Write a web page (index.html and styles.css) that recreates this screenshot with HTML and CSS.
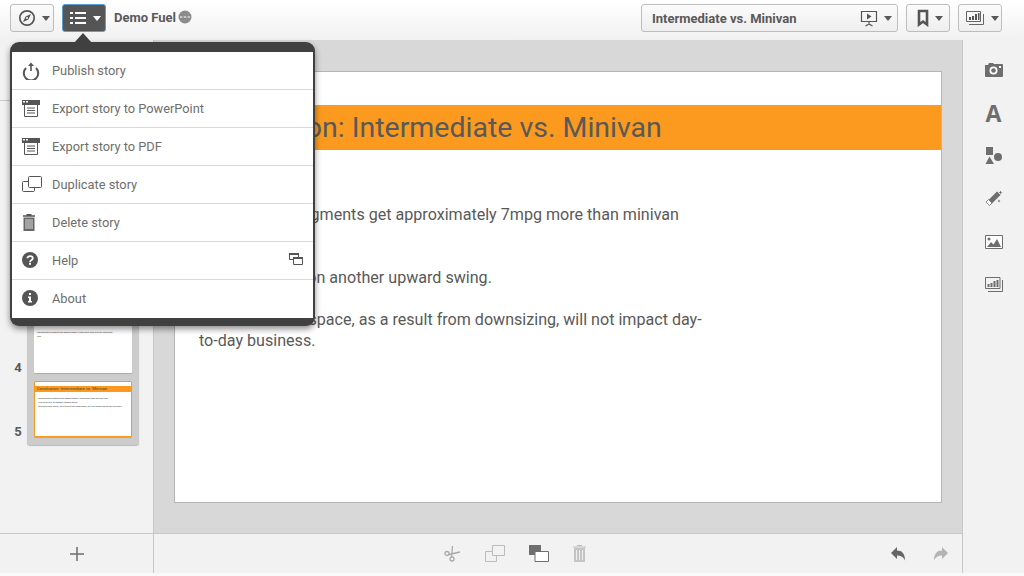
FILE: index.html
```html
<!DOCTYPE html>
<html lang="en">
<head>
    <meta charset="UTF-8">
    <title>Demo Fuel</title>
    <link rel="stylesheet" href="styles.css">
</head>
<body>
    <div class="app">
        <header class="toolbar">
            <button class="tool-btn">
                <svg width="18" height="18" viewBox="0 0 18 18"><circle cx="9" cy="9" r="7.2" fill="none" stroke="#555" stroke-width="1.7"/><path d="M13 5l-2.600 5.400L5 13l2.600-5.400z" fill="#555"/><circle cx="9" cy="9" r="1" fill="#fff"/></svg>
                <span class="caret"></span>
            </button>
            <button class="tool-btn tool-btn-active">
                <svg width="18" height="14" viewBox="0 0 18 14"><path d="M1 1h3v2H1zM6 1h11v2H6zM1 6h3v2H1zM6 6h11v2H6zM1 11h3v2H1zM6 11h11v2H6z" fill="#fff"/></svg>
                <span class="caret"></span>
            </button>
            <span class="app-name">Demo Fuel</span>
            <svg class="status-icon" width="14" height="14" viewBox="0 0 14 14"><circle cx="7" cy="7" r="6.500" fill="#8c8c8c"/><path d="M2 7h2.500M5.800 7h2.500M9.600 7h2.500" stroke="#fff" stroke-width="1"/></svg>
            <div class="spacer"></div>
            <button class="tool-btn story-select">
                <span class="story-name">Intermediate vs. Minivan</span>
                <svg width="18" height="18" viewBox="0 0 18 18"><path d="M1.500 2.500h15v10h-15z" fill="none" stroke="#555" stroke-width="1.200"/><path d="M7 4.500l4.500 3-4.500 3z" fill="#555"/><path d="M9 12.500v2.500M5.500 17L9 15l3.500 2" stroke="#555" stroke-width="1.200" fill="none"/></svg>
                <span class="caret"></span>
            </button>
            <button class="tool-btn">
                <svg width="12" height="18" viewBox="0 0 12 18"><path d="M2 2h8v13.500l-4-3-4 3z" fill="none" stroke="#555" stroke-width="2.600"/></svg>
                <span class="caret"></span>
            </button>
            <button class="tool-btn">
                <svg width="20" height="16" viewBox="0 0 20 16"><path d="M1.500 1.500h14v10h-14z" fill="none" stroke="#666"/><path d="M4 14.500h14.500V4" fill="none" stroke="#666"/><path d="M4 7h2v3H4zM7 6h2v4H7zM10 4h2v6h-2zM13 3h1.500v7H13z" fill="#555"/></svg>
                <span class="caret"></span>
            </button>
        </header>

        <div class="workspace">
            <aside class="sidebar">
                <div class="sidebar-head"></div>
                <div class="slide-list">
                    <div class="slide-nums">
                        <span>1</span><span>2</span><span>3</span><span>4</span><span>5</span>
                    </div>
                    <div class="slide-group">
                        <div class="thumb"></div>
                        <div class="thumb"></div>
                        <div class="thumb"></div>
                        <div class="thumb">
                            <div class="thumb-line thumb-line-top">Intermediate segments get approximately 7mpg more than minivan segments</div>
                            <div class="thumb-line">cars</div>
                        </div>
                        <div class="thumb thumb-active">
                            <div class="thumb-title">Conclusion: Intermediate vs. Minivan</div>
                            <div class="thumb-line">Intermediate segments get approximately 7mpg more than minivan cars</div>
                            <div class="thumb-line">Fuel prices are on another upward swing.</div>
                            <div class="thumb-line">Reduced cabin space, as a result from downsizing, will not impact day-to-day business.</div>
                        </div>
                    </div>
                </div>
            </aside>

            <main class="stage">
                <section class="slide">
                    <h1 class="slide-title">Conclusion: Intermediate vs. Minivan</h1>
                    <div class="slide-body">
                        <p>Intermediate segments get approximately 7mpg more than minivan<br>cars.</p>
                        <p>Fuel prices are on another upward swing.</p>
                        <p>Reduced cabin space, as a result from downsizing, will not impact day-<br>to-day business.</p>
                    </div>
                </section>
            </main>

            <aside class="tools">
                <div class="tool-slot"><svg width="18" height="16" viewBox="0 0 18 16"><path d="M0 3h3l1-2h4l1 1h8a1 1 0 0 1 1 1v11a1 1 0 0 1-1 1H1a1 1 0 0 1-1-1z" fill="#6e6e6e"/><circle cx="8.500" cy="8.500" r="4" fill="#fff"/><circle cx="8.500" cy="8.500" r="2.300" fill="#6e6e6e"/><path d="M14 4h2v2h-2z" fill="#fff"/></svg></div>
                <div class="tool-slot"><span class="tool-letter">A</span></div>
                <div class="tool-slot"><svg width="18" height="18" viewBox="0 0 18 18"><path d="M1 0h7v8H1z" fill="#6e6e6e"/><circle cx="13" cy="10" r="4" fill="#6e6e6e"/><path d="M4.500 9.500L9 17H.5z" fill="#6e6e6e"/></svg></div>
                <div class="tool-slot"><svg width="18" height="18" viewBox="0 0 18 18"><path d="M12 1.500l3.500 3.500L6 14.500 2.500 11z" fill="#6e6e6e"/><path d="M3.500 9.500l3.500 3.500-2.500 2.500L1 12z" fill="#fff" stroke="#6e6e6e" stroke-width=".8"/><path d="M15.500.5l.6 1.400 1.400.6-1.400.6-.6 1.400-.6-1.400-1.400-.6 1.400-.6zM14 9.500l.5 1 1 .5-1 .5-.5 1-.5-1-1-.5 1-.5z" fill="#6e6e6e"/></svg></div>
                <div class="tool-slot"><svg width="18" height="14" viewBox="0 0 18 14"><path d="M.5.500h17v13H.5z" fill="#fff" stroke="#6e6e6e"/><circle cx="4" cy="4" r="1.500" fill="#6e6e6e"/><path d="M2 12l4-5 2.500 2.500L12 4l4 8z" fill="#6e6e6e"/></svg></div>
                <div class="tool-slot"><svg width="18" height="16" viewBox="0 0 18 16"><path d="M.5.500h14.500v11H.5z" fill="#f2f2f2" stroke="#6e6e6e"/><path d="M3 14.500h14.500V3" fill="none" stroke="#6e6e6e"/><path d="M2.500 7h2v3h-2zM5.500 6h2v4h-2zM8.500 4h2v6h-2zM11.500 3h2v7h-2z" fill="#6e6e6e"/></svg></div>
            </aside>
        </div>

        <footer class="bottombar">
            <div class="add-slide">
                <svg width="14" height="14" viewBox="0 0 14 14"><path d="M0 7h14M7 0v14" stroke="#6e6e6e" stroke-width="1.500"/></svg>
            </div>
            <div class="edit-bar">
                <div class="edit-actions">
                    <svg width="17" height="18" viewBox="0 0 17 18"><g fill="none" stroke="#aaa" stroke-width="1.300"><circle cx="3" cy="8.500" r="2"/><circle cx="8" cy="14" r="2"/><path d="M5 9.500L16 7M7.500 12L8.500 1"/></g></svg>
                    <svg width="20" height="17" viewBox="0 0 20 17"><g stroke="#bbb" fill="#f2f2f2"><path d="M.5 6.500h11v10h-11z"/><path d="M7.500.5h12v10h-12z"/></g></svg>
                    <svg width="20" height="17" viewBox="0 0 20 17"><path d="M0 0h12v10H0z" fill="#6e6e6e"/><path d="M6 6.500h13.500v10H6z" fill="#fff" stroke="#6e6e6e"/></svg>
                    <svg width="13" height="17" viewBox="0 0 13 17"><path d="M1 3h11v14H1z" fill="#c4c4c4"/><path d="M0 2h13M4 .5h5" stroke="#bbb" stroke-width="1.200"/><path d="M3.500 5v10M6.500 5v10M9.500 5v10" stroke="#eee"/></svg>
                </div>
                <div class="history">
                    <svg width="15" height="14" viewBox="0 0 15 14"><path d="M6 0v3.500c5 0 8 3 8 10-1.500-3.500-4-5-8-5V12L0 6z" fill="#666"/></svg>
                    <svg width="15" height="14" viewBox="0 0 15 14"><path d="M9 0v3.500c-5 0-8 3-8 10 1.500-3.500 4-5 8-5V12l6-6z" fill="#b4b4b4"/></svg>
                </div>
            </div>
            <div class="bottom-fill"></div>
        </footer>
    </div>

    <div class="menu">
        <span class="menu-arrow"></span>
        <ul class="menu-list">
            <li class="menu-item">
                <svg width="18" height="18" viewBox="0 0 18 18"><path d="M4 6a7.200 7.200 0 1 0 10 0" fill="none" stroke="#555" stroke-width="2"/><path d="M9 9V3" stroke="#555" stroke-width="1.600"/><path d="M6 4l3-3.500L12 4z" fill="#555"/></svg>
                <span>Publish story</span>
            </li>
            <li class="menu-item">
                <svg width="18" height="17" viewBox="0 0 18 17"><path d="M0 0h18v5H0z" fill="#555"/><path d="M1 1h2v1.500H1zM4 1h2v1.500H4z" fill="#fff"/><path d="M2.500 5v11.500h13V5" fill="#fff" stroke="#555"/><path d="M5 8h8M5 10.500h8M5 13h8" stroke="#555"/></svg>
                <span>Export story to PowerPoint</span>
            </li>
            <li class="menu-item">
                <svg width="18" height="17" viewBox="0 0 18 17"><path d="M0 0h18v5H0z" fill="#555"/><path d="M1 1h2v1.500H1zM4 1h2v1.500H4z" fill="#fff"/><path d="M2.500 5v11.500h13V5" fill="#fff" stroke="#555"/><path d="M5 8h8M5 10.500h8M5 13h8" stroke="#555"/></svg>
                <span>Export story to PDF</span>
            </li>
            <li class="menu-item">
                <svg width="20" height="16" viewBox="0 0 20 16"><g stroke="#555" fill="#fff"><rect x=".5" y="5.500" width="12" height="10" rx="1"/><rect x="6.500" y=".5" width="13" height="11" rx="1"/></g></svg>
                <span>Duplicate story</span>
            </li>
            <li class="menu-item">
                <svg width="14" height="17" viewBox="0 0 14 17"><path d="M1 2h12M4.500.8h5" stroke="#555" stroke-width="1.500"/><path d="M1.500 3.500h11V17h-11z" fill="#666"/><path d="M4 5v10M6 5v10M8 5v10M10 5v10" stroke="#fff" stroke-width=".8"/></svg>
                <span>Delete story</span>
            </li>
            <li class="menu-item">
                <svg width="16" height="16" viewBox="0 0 16 16"><circle cx="8" cy="8" r="8" fill="#555"/><path d="M5.300 6.200C5.300 3.500 10.800 3.500 10.800 6.300c0 2-2.800 1.800-2.800 3.600" fill="none" stroke="#fff" stroke-width="1.700"/><path d="M7 10.800h2v2H7z" fill="#fff"/></svg>
                <span>Help</span>
                <svg class="menu-extra" width="14" height="12" viewBox="0 0 14 12"><path d="M.5.500h9v6h-9z" fill="#fff" stroke="#555"/><path d="M0 0h10v2H0z" fill="#555"/><path d="M4.500 4.500h9v7h-9z" fill="#fff" stroke="#555"/><path d="M4 4h10v2H4z" fill="#555"/></svg>
            </li>
            <li class="menu-item">
                <svg width="16" height="16" viewBox="0 0 16 16"><circle cx="8" cy="8" r="8" fill="#555"/><path d="M7 3h2v2H7zM6 6.500h3V11h1v1.500H6V11h1V8H6z" fill="#fff"/></svg>
                <span>About</span>
            </li>
        </ul>
    </div>
</body>
</html>
```

FILE: styles.css
```css
* {
    box-sizing: border-box;
}
body {
    margin: 0;
    width: 1024px;
    height: 576px;
    overflow: hidden;
    background: #f9f9f9;
    font-family: Roboto, "Liberation Sans", sans-serif;
    color: #595959;
}
.app {
    display: flex;
    flex-direction: column;
    height: 573px;
}

/* top toolbar */
.toolbar {
    display: flex;
    align-items: flex-start;
    height: 40px;
    padding: 4px 22px 0 10px;
    gap: 8px;
    background: linear-gradient(#ffffff, #f1f1f1);
}
.tool-btn {
    display: flex;
    align-items: center;
    justify-content: center;
    gap: 6px;
    width: 44px;
    height: 28px;
    padding: 0 0 0 3px;
    border: 1px solid #bdbdbd;
    border-radius: 3px;
    background: linear-gradient(#fbfbfb, #eeeeee);
}
.tool-btn-active {
    padding-left: 1px;
    background: #555555;
    border-color: #5b9fd1;
}
.tool-btn-active .caret {
    border-top-color: #fff;
}
.caret {
    width: 0;
    height: 0;
    border-left: 4.500px solid transparent;
    border-right: 4.500px solid transparent;
    border-top: 5px solid #595959;
}
.app-name {
    margin-top: 6px;
    font-size: 13px;
    font-weight: bold;
    color: #595959;
}
.status-icon {
    margin: 6px 0 0 -6px;
}
.spacer {
    flex: 1;
}
.story-select {
    width: 257px;
    justify-content: flex-start;
    padding: 0 5px 0 10px;
}
.story-name {
    flex: 1;
    text-align: left;
    font-family: Roboto, "Liberation Sans", sans-serif;
    font-size: 13px;
    font-weight: bold;
    color: #595959;
}

/* main area */
.workspace {
    height: 494px;
    display: flex;
}
.sidebar {
    flex: none;
    width: 154px;
    background: #f2f2f2;
    border-right: 1px solid #c8c8c8;
    border-bottom: 1px solid #c8c8c8;
}
.sidebar-head {
    height: 61px;
    border-bottom: 1px solid #c8c8c8;
}
.slide-list {
    display: flex;
    align-items: flex-start;
    padding-top: 17px;
}
.slide-nums {
    width: 27px;
    display: flex;
    flex-direction: column;
    padding: 49px 0 0 9px;
    gap: 46px;
    font-size: 13px;
    line-height: 18px;
    font-weight: bold;
    text-align: center;
}
.slide-group {
    width: 112px;
    padding: 7px 7px 8px;
    display: flex;
    flex-direction: column;
    gap: 8px;
    background: #cccccc;
    border-radius: 0 0 3px 3px;
    box-shadow: 0 1px 1px #b9b9b9;
}
.thumb {
    height: 56px;
    background: #fff;
    box-shadow: 0 1px 1px #aaaaaa;
    border-radius: 1px;
    overflow: hidden;
}
.thumb-active {
    border: 1px solid #fb9a1e;
    padding-top: 4px;
}
.thumb-title {
    height: 6px;
    margin-bottom: 5px;
    padding-left: 2px;
    background: #fb9a1e;
    font-size: 4.300px;
    line-height: 6px;
    white-space: nowrap;
    color: #444;
}
.thumb-line {
    padding-left: 3px;
    font-size: 2.200px;
    line-height: 4px;
    white-space: nowrap;
    color: #333;
}
.thumb-line-top {
    margin-top: 14px;
}

.stage {
    flex: none;
    width: 808px;
    padding: 31px 20px 0;
    background: #d8d8d8;
    border-bottom: 1px solid #c8c8c8;
}
.slide {
    width: 768px;
    height: 432px;
    padding-top: 33px;
    background: #fff;
    border: 1px solid #b5b5b5;
}
.slide-title {
    margin: 0;
    height: 45px;
    padding-left: 21px;
    background: #fb9a1e;
    font-size: 28.500px;
    font-weight: normal;
    line-height: 45px;
    color: #595959;
}
.slide-body {
    padding: 54px 0 0 24px;
    font-size: 16.100px;
    line-height: 21px;
    color: #595959;
}
.slide-body p {
    margin: 0 0 21px;
}

.tools {
    flex: none;
    width: 62px;
    padding: 8px 0 0;
    background: #f2f2f2;
    border-left: 1px solid #c8c8c8;
}
.tool-slot {
    display: flex;
    align-items: center;
    justify-content: center;
    height: 43px;
}
.tool-letter {
    font-family: "Open Sans", sans-serif;
    font-size: 23px;
    line-height: 18px;
    font-weight: bold;
    color: #6e6e6e;
}

/* bottom bar */
.bottombar {
    display: flex;
    height: 39px;
    background: #f2f2f2;
}
.add-slide {
    flex: none;
    width: 154px;
    display: flex;
    align-items: center;
    justify-content: center;
    border-right: 1px solid #c8c8c8;
}
.edit-bar {
    flex: none;
    width: 808px;
    display: flex;
    align-items: center;
    position: relative;
    justify-content: center;
    padding-right: 87px;
}
.edit-actions {
    display: flex;
    align-items: center;
    gap: 24px;
}
.history {
    position: absolute;
    right: 14px;
    top: 13px;
    display: flex;
    gap: 27px;
}
.bottom-fill {
    flex: 1;
    border-left: 1px solid #c8c8c8;
}

/* dropdown menu */
.menu {
    position: absolute;
    left: 10px;
    top: 42px;
    width: 305px;
    height: 284px;
    padding: 10px 2px 8px;
    background: #404040;
    border-radius: 9px;
    box-shadow: 0 3px 6px rgba(0, 0, 0, 0.45);
}
.menu-arrow {
    position: absolute;
    left: 64px;
    top: -9px;
    width: 0;
    height: 0;
    border-left: 9px solid transparent;
    border-right: 9px solid transparent;
    border-bottom: 10px solid #404040;
}
.menu-list {
    margin: 0;
    padding: 0;
    list-style: none;
    background: #fff;
}
.menu-item {
    position: relative;
    display: flex;
    align-items: center;
    height: 38px;
    padding-left: 40px;
    font-size: 12.800px;
    color: #6e6e6e;
    border-bottom: 1px solid #d9d9d9;
}
.menu-item:last-child {
    border-bottom-color: transparent;
}
.menu-item svg:first-child {
    position: absolute;
    left: 10px;
    top: 10px;
}
.menu-extra {
    position: absolute;
    right: 10px;
    top: 11px;
}
```
